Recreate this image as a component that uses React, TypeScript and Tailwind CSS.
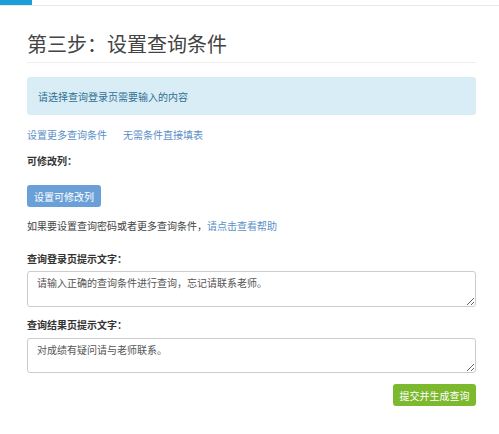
import React from "react";

export default function App() {
  const font = { fontFamily: '"Noto Sans CJK SC", "Noto Sans", sans-serif' };
  return (
    <div className="w-[499px] h-[434px] bg-white overflow-hidden text-[#333]" style={font}>
      <div className="h-[6px] border-b border-[#e8e8e8] flex">
        <div className="w-[32px] h-[5px] bg-[#1a9fd9]" />
      </div>
      <div className="pl-[27px] pr-[23px]">
        <h1 className="mt-[24px] text-[20px] leading-[28px] text-[#444] font-normal pb-[4px] border-b border-[#eeeeee]">
          第三步：设置查询条件
        </h1>
        <div className="mt-[14px] h-[38px] rounded-[3px] bg-[#d9edf7] text-[#31708f] text-[10px] flex items-center pl-[11px]">
          请选择查询登录页需要输入的内容
        </div>
        <div className="mt-[13px] flex gap-[16px] text-[10px] leading-[14px] text-[#5b8fc7]">
          <span>设置更多查询条件</span>
          <span>无需条件直接填表</span>
        </div>
        <div className="mt-[12px] text-[10px] leading-[14px] font-bold text-[#333]">可修改列：</div>
        <button className="mt-[17px] h-[22px] w-[74px] rounded-[3px] bg-[#6a9fd8] text-white text-[10px] flex items-center justify-center">
          设置可修改列
        </button>
        <div className="mt-[12px] text-[10px] leading-[14px] text-[#444]">
          如果要设置查询密码或者更多查询条件，<span className="text-[#5b8fc7]">请点击查看帮助</span>
        </div>
        <div className="mt-[19px] text-[10px] leading-[14px] font-bold text-[#333]">查询登录页提示文字：</div>
        <textarea
          readOnly
          defaultValue="请输入正确的查询条件进行查询，忘记请联系老师。"
          className="mt-[5px] block w-full h-[36px] border border-[#cccccc] rounded-[3px] px-[9px] py-[4px] text-[10px] leading-[14px] text-[#555] outline-none"
          style={font}
        />
        <div className="mt-[11px] text-[10px] leading-[14px] font-bold text-[#333]">查询结果页提示文字：</div>
        <textarea
          readOnly
          defaultValue="对成绩有疑问请与老师联系。"
          className="mt-[6px] block w-full h-[35px] border border-[#cccccc] rounded-[3px] px-[9px] py-[4px] text-[10px] leading-[14px] text-[#555] outline-none"
          style={font}
        />
        <div className="mt-[11px] flex justify-end">
          <button className="h-[22px] w-[83px] rounded-[3px] bg-[#7cb92e] text-white text-[10px] flex items-center justify-center">
            提交并生成查询
          </button>
        </div>
      </div>
    </div>
  );
}
